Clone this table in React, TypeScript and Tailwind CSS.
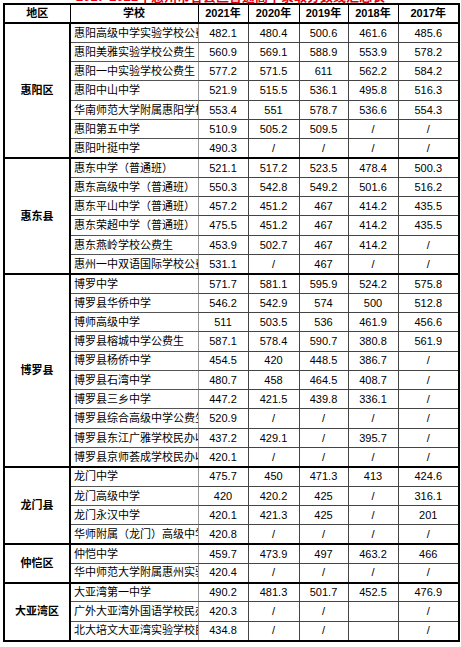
import React from 'react'

type Row = [string, string, string, string, string, string]

interface Group {
  region: string
  rows: Row[]
}

const groups: Group[] = [
  {
    region: '惠阳区',
    rows: [
      ['惠阳高级中学实验学校公费生', '482.1', '480.4', '500.6', '461.6', '485.6'],
      ['惠阳美雅实验学校公费生', '560.9', '569.1', '588.9', '553.9', '578.2'],
      ['惠阳一中实验学校公费生', '577.2', '571.5', '611', '562.2', '584.2'],
      ['惠阳中山中学', '521.9', '515.5', '536.1', '495.8', '516.3'],
      ['华南师范大学附属惠阳学校', '553.4', '551', '578.7', '536.6', '554.3'],
      ['惠阳第五中学', '510.9', '505.2', '509.5', '/', '/'],
      ['惠阳叶挺中学', '490.3', '/', '/', '/', '/'],
    ],
  },
  {
    region: '惠东县',
    rows: [
      ['惠东中学（普通班）', '521.1', '517.2', '523.5', '478.4', '500.3'],
      ['惠东高级中学（普通班）', '550.3', '542.8', '549.2', '501.6', '516.2'],
      ['惠东平山中学（普通班）', '457.2', '451.2', '467', '414.2', '435.5'],
      ['惠东荣超中学（普通班）', '475.5', '451.2', '467', '414.2', '435.5'],
      ['惠东燕岭学校公费生', '453.9', '502.7', '467', '414.2', '/'],
      ['惠州一中双语国际学校公费生', '531.1', '/', '467', '/', '/'],
    ],
  },
  {
    region: '博罗县',
    rows: [
      ['博罗中学', '571.7', '581.1', '595.9', '524.2', '575.8'],
      ['博罗县华侨中学', '546.2', '542.9', '574', '500', '512.8'],
      ['博师高级中学', '511', '503.5', '536', '461.9', '456.6'],
      ['博罗县榕城中学公费生', '587.1', '578.4', '590.7', '380.8', '561.9'],
      ['博罗县杨侨中学', '454.5', '420', '448.5', '386.7', '/'],
      ['博罗县石湾中学', '480.7', '458', '464.5', '408.7', '/'],
      ['博罗县三乡中学', '447.2', '421.5', '439.8', '336.1', '/'],
      ['博罗县综合高级中学公费生', '520.9', '/', '/', '/', '/'],
      ['博罗县东江广雅学校民办收费生', '437.2', '429.1', '/', '395.7', '/'],
      ['博罗县京师荟成学校民办收费生', '420.1', '/', '/', '/', '/'],
    ],
  },
  {
    region: '龙门县',
    rows: [
      ['龙门中学', '475.7', '450', '471.3', '413', '424.6'],
      ['龙门高级中学', '420', '420.2', '425', '/', '316.1'],
      ['龙门永汉中学', '420.1', '421.3', '425', '/', '201'],
      ['华师附属（龙门）高级中学', '420.8', '/', '/', '/', '/'],
    ],
  },
  {
    region: '仲恺区',
    rows: [
      ['仲恺中学', '459.7', '473.9', '497', '463.2', '466'],
      ['华中师范大学附属惠州实验学校', '420.4', '/', '/', '/', '/'],
    ],
  },
  {
    region: '大亚湾区',
    rows: [
      ['大亚湾第一中学', '490.2', '481.3', '501.7', '452.5', '476.9'],
      ['广外大亚湾外国语学校民办收费生', '420.3', '/', '/', '', '/'],
      ['北大培文大亚湾实验学校民办收费生', '434.8', '/', '/', '', '/'],
    ],
  },
]

const years = ['2021年', '2020年', '2019年', '2018年', '2017年']

export default function App() {
  return (
    <div
      className="w-[461px] h-[647px] bg-white text-black overflow-hidden"
      style={{ fontFamily: '"Liberation Sans", Arial, "Noto Sans CJK SC", sans-serif' }}
    >
      {/* Title, cut off by the top edge */}
      <div className="h-[3px] overflow-hidden flex items-end justify-center">
        <span className="text-[13px] leading-[13px] font-bold text-[#e60012] whitespace-nowrap">
          2017-2021年惠州市各县区普通高中录取分数线汇总表
        </span>
      </div>

      <table className="ml-[3px] w-[455px] table-fixed border-collapse border-2 border-black text-[11px]">
        <colgroup>
          <col className="w-[66px]" />
          <col className="w-[128px]" />
          <col className="w-[50px]" />
          <col className="w-[51px]" />
          <col className="w-[49px]" />
          <col className="w-[50px]" />
          <col className="w-[61px]" />
        </colgroup>
        <thead>
          <tr className="h-[19px]">
            <th className="border border-black font-bold p-0 text-center">地区</th>
            <th className="border border-black font-bold p-0 text-center">学校</th>
            {years.map((y) => (
              <th key={y} className="border border-black font-bold p-0 text-center">
                {y}
              </th>
            ))}
          </tr>
        </thead>
        <tbody>
          {groups.map((g) =>
            g.rows.map((r, i) => (
              <tr key={g.region + r[0]} className="h-[19.3px]">
                {i === 0 && (
                  <td
                    rowSpan={g.rows.length}
                    className="border-2 border-black font-bold text-center p-0"
                  >
                    {g.region}
                  </td>
                )}
                <td
                  className={`border border-[#555] border-r-[#999] p-0 pl-[3px] whitespace-nowrap overflow-hidden text-left ${
                    i === 0 ? 'border-t-2 border-t-black' : ''
                  }`}
                >
                  {r[0]}
                </td>
                {r.slice(1).map((v, j) => (
                  <td
                    key={j}
                    className={`border border-[#444] p-0 text-center whitespace-nowrap overflow-hidden ${
                      i === 0 ? 'border-t-2 border-t-black' : ''
                    } ${j === 0 ? 'border-l-[#999]' : ''}`}
                  >
                    {v}
                  </td>
                ))}
              </tr>
            ))
          )}
        </tbody>
      </table>
    </div>
  )
}
